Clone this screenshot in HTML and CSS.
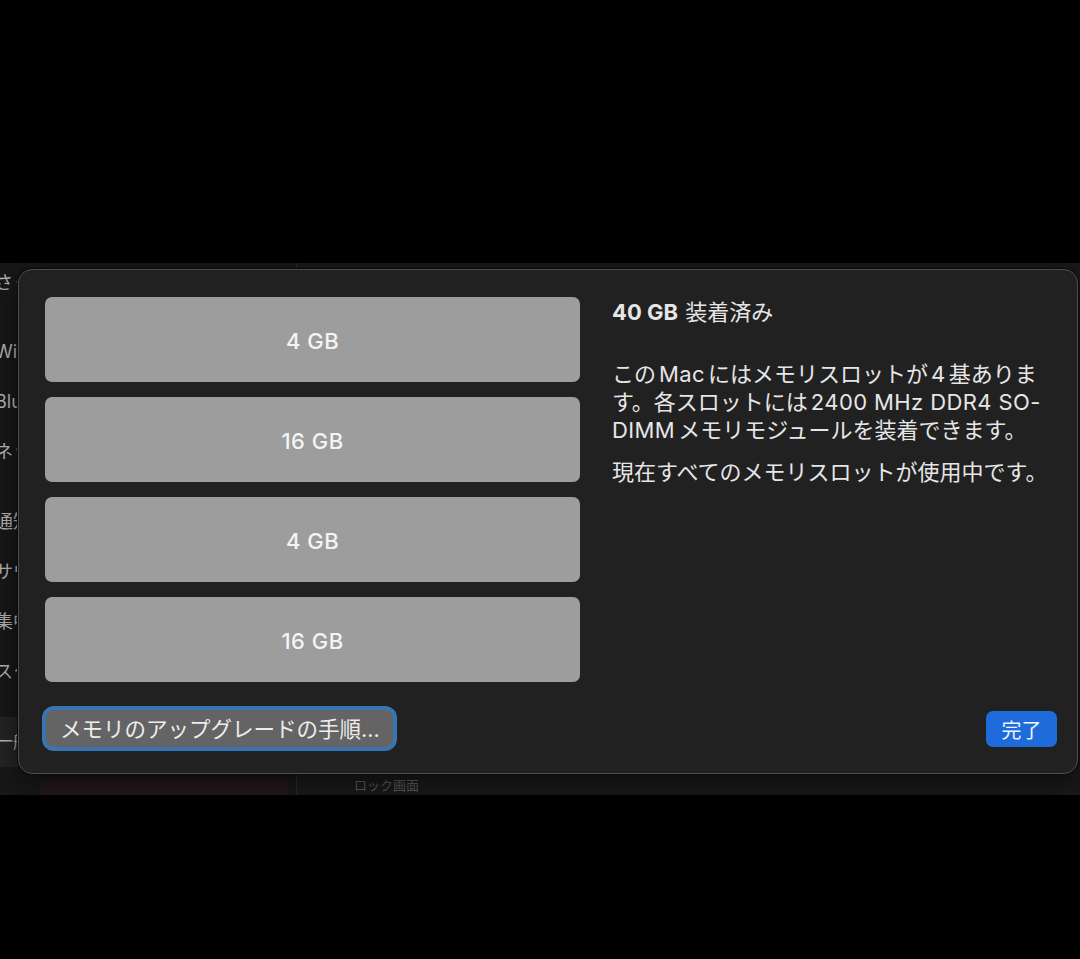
FILE: index.html
```html
<!DOCTYPE html>
<html lang="ja">
<head>
	<meta charset="UTF-8">
	<title>メモリ</title>
	<link rel="stylesheet" href="styles.css">
</head>
<body>
<div class="screen">
	<div class="app">
		<aside class="sidebar">
			<div class="side-group side-top">
				<div class="side-item">さくら</div>
			</div>
			<div class="side-group">
				<div class="side-item">Wi-Fi</div>
				<div class="side-item">Bluetooth</div>
				<div class="side-item">ネットワーク</div>
			</div>
			<div class="side-group">
				<div class="side-item">通知</div>
				<div class="side-item">サウンド</div>
				<div class="side-item">集中モード</div>
				<div class="side-item">スクリーンタイム</div>
			</div>
			<div class="side-group">
				<div class="side-item on">一般</div>
			</div>
			<div class="side-foot"></div>
		</aside>
		<main class="pane">
			<div class="pane-foot">ロック画面</div>
		</main>
	</div>

	<section class="sheet">
		<div class="sheet-body">
			<div class="slots">
				<div class="slot">4 GB</div>
				<div class="slot">16 GB</div>
				<div class="slot">4 GB</div>
				<div class="slot">16 GB</div>
			</div>
			<div class="info">
				<h2 class="info-title"><b>40 GB</b> 装着済み</h2>
				<p class="info-text">この<span class="en">Mac</span>にはメモリスロットが<span class="en">4</span>基ありま<br>す。各スロットには<span class="en">2400 MHz DDR4 SO-</span><br><span class="en en-start">DIMM</span>メモリモジュールを装着できます。</p>
				<p class="info-text info-note">現在すべてのメモリスロットが使用中です。</p>
			</div>
		</div>
		<div class="sheet-foot">
			<button class="btn btn-focus">メモリのアップグレードの手順...</button>
			<button class="btn btn-primary">完了</button>
		</div>
	</section>
</div>
</body>
</html>
```

FILE: styles.css
```css
body {
	margin: 0;
	background: #000;
	font-family: "Inter", "Noto Sans CJK JP", sans-serif;
}

.screen {
	margin-top: 263px;
	height: 532px;
	position: relative;
	overflow: hidden;
	background: #141414;
}

/* settings window behind the sheet */
.app {
	display: flex;
	height: 100%;
}

.sidebar {
	width: 297px;
	display: flex;
	flex-direction: column;
	background: #181818;
	border-right: 1px solid #2a2a2a;
	box-sizing: border-box;
}

.side-group {
	margin-top: 20px;
}

.side-group:nth-child(2) {
	margin-top: 24px;
}

.side-group:last-of-type {
	margin-top: 23px;
}

.side-top {
	margin-top: 0;
}

.side-top .side-item {
	height: 40px;
	line-height: 40px;
}

.side-item {
	height: 50px;
	line-height: 50px;
	margin-left: -5px;
	font-size: 18px;
	color: #b9b9b9;
	white-space: nowrap;
}

.side-item.on {
	background: #252525;
}

.side-foot {
	margin: auto 8px 0 40px;
	height: 16px;
	background: #24191b;
}

.pane {
	flex: 1;
	display: flex;
	flex-direction: column;
	justify-content: flex-end;
	background: #1a1a1a;
}

.pane-foot {
	padding: 0 0 2px 57px;
	font-size: 13px;
	line-height: 16px;
	color: #5e5e5e;
}

/* memory sheet */
.sheet {
	position: absolute;
	left: 18px;
	top: 6px;
	width: 1060px;
	height: 505px;
	box-sizing: border-box;
	display: flex;
	flex-direction: column;
	padding: 27px 20px 26px 26px;
	background: #212121;
	border: 1px solid #4e4e4e;
	border-radius: 14px;
	box-shadow: 0 0 0 1px #0a0a0a, 0 8px 30px rgba(0, 0, 0, .6);
}

.sheet-body {
	display: grid;
	grid-template-columns: 535px 1fr;
	column-gap: 32px;
}

.slots {
	display: flex;
	flex-direction: column;
	gap: 15px;
}

.slot {
	height: 85px;
	display: flex;
	align-items: center;
	justify-content: center;
	padding-top: 2px;
	box-sizing: border-box;
	background: #9d9d9d;
	border-radius: 7px;
	color: #f4f4f4;
	font-size: 22px;
	font-weight: 500;
	letter-spacing: .5px;
}

.info {
	color: #e6e6e6;
	font-size: 22px;
	line-height: 28px;
	padding-top: 1px;
}

.info-title {
	margin: 0;
	font-size: 22px;
	font-weight: normal;
}

.info-title b {
	font-weight: 700;
	margin-right: 1px;
}

.info-text {
	margin: 34px 0 0;
}

.info-note {
	margin-top: 14px;
}

.en {
	margin: 0 3px;
	letter-spacing: .4px;
}

.en-start {
	margin-left: 0;
}

.sheet-foot {
	margin-top: auto;
	display: flex;
	justify-content: space-between;
	align-items: flex-end;
}

.btn {
	border: 0;
	font-family: inherit;
	padding: 0;
	box-sizing: border-box;
}

.btn-focus {
	width: 347px;
	height: 37px;
	margin-left: 1px;
	padding: 0 0 2px 14px;
	text-align: left;
	font-size: 21.5px;
	background: #646464;
	color: #ededed;
	border-radius: 8px;
	box-shadow: 0 0 0 4px #3975b0;
}

.btn-primary {
	width: 71px;
	height: 36px;
	font-size: 20px;
	background: #1e6cdb;
	color: #eef3fc;
	border-radius: 7px;
}
```
